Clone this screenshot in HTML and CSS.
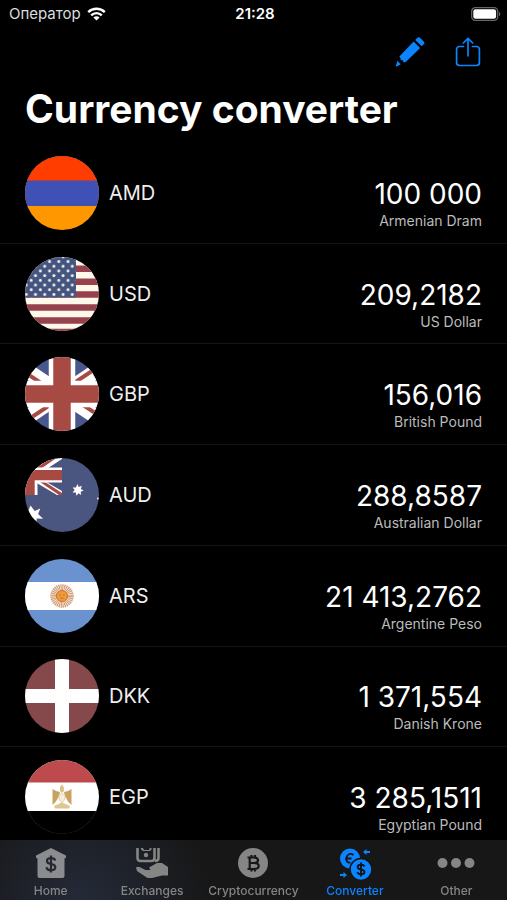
FILE: index.html
```html
<!DOCTYPE html>
<html lang="en">
<head>
  <meta charset="UTF-8">
  <meta name="viewport" content="width=device-width, initial-scale=1.0">
  <title>Currency converter</title>
  <link rel="stylesheet" href="styles.css">
</head>
<body>
  <!-- Status bar -->
  <div class="status">
    <div class="carrier">
      <span lang="ru">Оператор</span>
      <svg width="19" height="14" viewBox="0 0 19 14" fill="none" stroke="#fff" stroke-width="2.4">
        <path d="M1.2 5.2a11.8 11.8 0 0 1 16.6 0M4.2 8.3a7.5 7.5 0 0 1 10.6 0"/>
        <path d="M9.5 13.6L6.4 10.5a4.4 4.4 0 0 1 6.2 0z" fill="#fff" stroke="none"/>
      </svg>
    </div>
    <div class="time">21:28</div>
    <div class="battery">
      <svg width="30" height="14" viewBox="0 0 30 14">
        <rect x="0.7" y="0.7" width="26" height="12.6" rx="3.6" fill="none" stroke="#666" stroke-width="1.3"/>
        <rect x="2.3" y="2.3" width="22.8" height="9.4" rx="2.2" fill="#fff"/>
        <path d="M28 4.8c1.8.7 1.8 3.7 0 4.4z" fill="#666"/>
      </svg>
    </div>
  </div>

  <!-- Toolbar -->
  <div class="toolbar">
    <button type="button" aria-label="Edit">
      <svg width="30" height="30" viewBox="0 0 30 30" fill="#0a84ff">
        <path d="M20.2 2.9l2-1.9q1.5-1.3 3 0l3.5 3.4q1.4 1.5 0 2.9l-2 1.9z"/>
        <path d="M18.6 4.6l6.5 6.3L10.8 25l-2.3.4-.5-1.8-2.3-.5-.2-1.8-1.1-1.9z"/>
        <path d="M2.6 23.6l1.300 2 1.900 1.400-.8.8-3.400 1.600q-1 .2-.7-.8z"/>
      </svg>
    </button>
    <button type="button" aria-label="Share">
      <svg width="26" height="30" viewBox="0 0 26 30" fill="none" stroke="#0a84ff" stroke-width="1.7" stroke-linecap="round" stroke-linejoin="round">
        <path d="M8.5 9.5H4.6q-3 0-3 3v13q0 3 3 3h16.8q3 0 3-3v-13q0-3-3-3h-3.9"/>
        <path d="M13 18.8V1.4M8.3 6L13 1.3 17.7 6"/>
      </svg>
    </button>
  </div>

  <h1>Currency converter</h1>

  <!-- Currencies -->
  <ul class="rates">
    <li>
      <svg class="flag" viewBox="0 0 74 74">
        <rect width="74" height="74" fill="#ff9800"/>
        <rect width="74" height="50" fill="#3f51b5"/>
        <rect width="74" height="24.5" fill="#ff3d00"/>
      </svg>
      <span class="code">AMD</span>
      <div class="value">
        <span class="amount">100 000</span>
        <span class="name">Armenian Dram</span>
      </div>
    </li>
    <li>
      <svg class="flag" viewBox="0 0 74 74">
        <defs>
          <pattern id="stars" x="19.7" y="2.1" width="9.2" height="9.4" patternUnits="userSpaceOnUse">
            <circle cx="4.9" cy="2.4" r="1.5" fill="#f4f1ea"/>
            <circle cx="0" cy="7.1" r="1.5" fill="#f4f1ea"/>
            <circle cx="9.2" cy="7.1" r="1.5" fill="#f4f1ea"/>
          </pattern>
        </defs>
        <rect width="74" height="74" fill="#fdf8ea"/>
        <path d="M0 11.8h74M0 24.7h74M0 37.6h74M0 50.5h74M0 63.4h74M0 75h74" stroke="#96424d" stroke-width="6.5"/>
        <rect width="51" height="40.5" fill="#445580"/>
        <rect width="51" height="40.5" fill="url(#stars)"/>
      </svg>
      <span class="code">USD</span>
      <div class="value">
        <span class="amount">209,2182</span>
        <span class="name">US Dollar</span>
      </div>
    </li>
    <li>
      <svg class="flag" viewBox="0 0 74 74">
        <rect width="74" height="74" fill="#48578c"/>
        <path d="M-18.5 0l111 74M92.5 0l-111 74" stroke="#fff" stroke-width="15"/>
        <path d="M-18.5 3L37 40M92.5-3L37 34M-18.5 77L37 40M92.5 71L37 34" stroke="#a84a44" stroke-width="4"/>
        <path d="M37 0v74M0 37h74" stroke="#fff" stroke-width="26.5"/>
        <path d="M37 0v74M0 37h74" stroke="#a84a44" stroke-width="17.5"/>
      </svg>
      <span class="code">GBP</span>
      <div class="value">
        <span class="amount">156,016</span>
        <span class="name">British Pound</span>
      </div>
    </li>
    <li>
      <svg class="flag" viewBox="0 0 74 74">
        <rect width="74" height="74" fill="#4a567f"/>
        <path d="M8 20L37 1V-4H28L8 9zM10 22h8l19 11v4h-5L10 24z" fill="#fff"/>
        <path d="M11 10L28-1h5L17 10zM15 24h5l17 11v2h-3z" fill="#a84a44"/>
        <path d="M0 9.5h37v15H12.5V37H0z" fill="#fff"/>
        <path d="M0 12h37v10.2H9.7V37H0z" fill="#a84a44"/>
        <path d="M52.5 26l1.200 3 3.100-1.200-1 3.100 2.900 1.600-3 1.200.5 3.300-2.700-1.700-2.100 2.500-.6-3.200-3.300-.2 2.200-2.400-2.100-2.500 3.300.1z" fill="#fff"/>
        <path d="M5.500 47.500l4.200 5.500 5.600-2.500-2.200 5.500 5 4.800-6.500-.4.300 2.700-4.400-2.300L3 63.500v-10z" fill="#fff"/>
        <circle cx="73" cy="40.5" r="1" fill="#fff"/>
      </svg>
      <span class="code">AUD</span>
      <div class="value">
        <span class="amount">288,8587</span>
        <span class="name">Australian Dollar</span>
      </div>
    </li>
    <li>
      <svg class="flag" viewBox="0 0 74 74">
        <rect width="74" height="74" fill="#6a92ce"/>
        <rect y="23" width="74" height="28" fill="#fff"/>
        <circle cx="37" cy="37" r="8.5" fill="none" stroke="#d29b74" stroke-width="6.5" stroke-dasharray="1.1 .569"/>
        <circle cx="37" cy="37" r="5.5" fill="#f09a3a" stroke="#c9742c"/>
        <path d="M34.5 36h1.5m2 0h1.500M35.5 39h3" stroke="#c06c25" fill="none"/>
      </svg>
      <span class="code">ARS</span>
      <div class="value">
        <span class="amount">21 413,2762</span>
        <span class="name">Argentine Peso</span>
      </div>
    </li>
    <li>
      <svg class="flag" viewBox="0 0 74 74">
        <rect width="74" height="74" fill="#85484b"/>
        <path d="M37 0v74M0 37h74" stroke="#fff" stroke-width="14"/>
      </svg>
      <span class="code">DKK</span>
      <div class="value">
        <span class="amount">1 371,554</span>
        <span class="name">Danish Krone</span>
      </div>
    </li>
    <li>
      <svg class="flag" viewBox="0 0 74 74">
        <rect width="74" height="74" fill="#000"/>
        <rect width="74" height="51" fill="#fff"/>
        <rect width="74" height="22.5" fill="#bd4a4d"/>
        <path d="M3 51a36.6 36.6 0 0 0 68 0" fill="none" stroke="#333" stroke-width=".8"/>
        <path d="M27.5 29l3.500 2 4 1-1 4-3 5.500-3.500 3.500zM46.500 29L43 31l-4 1 1 4 3 5.500 3.500 3.500z" fill="#c9a263"/>
        <path d="M35 27l2-2.500 1.800 2.500.2 4-2 2-2-2z" fill="#dcc085"/>
        <path d="M34 34h6v5l-3 4-3-4z" fill="#f6eedc" stroke="#d8bd86" stroke-width=".7"/>
        <path d="M29 46l8-3.500 8 3.500-1 2.500H30z" fill="#dfc58f"/>
      </svg>
      <span class="code">EGP</span>
      <div class="value">
        <span class="amount">3 285,1511</span>
        <span class="name">Egyptian Pound</span>
      </div>
    </li>
  </ul>

  <!-- Tab bar -->
  <nav class="tabs">
    <a href="#home">
      <svg width="32" height="32" viewBox="0 0 32 32">
        <path d="M16 1L31 8.500v2.200l-1.500.8V29q0 2-2 2H4.500q-2 0-2-2V11.500L1 10.700V8.500z" fill="#8a8c90"/>
        <path d="M20.300 13.500q-.8-2.500-4.300-2.500-4 0-4 3 0 2.500 4 3t4.300 3.200q0 3-4.300 3-4 0-4.500-3M16 8.500v17" fill="none" stroke="#25282f" stroke-width="2.200"/>
      </svg>
      <span>Home</span>
    </a>
    <a href="#exchanges">
      <svg width="34" height="32" viewBox="0 0 34 32">
        <path d="M2.500 1v10q0 3 3 3h11q3 0 3-3V1M20 14q3.500 0 3.500-3V1" fill="none" stroke="#858585" stroke-width="2.600"/>
        <path d="M6 1h2l1 2h5l1-2h1.500v1.500L15 4H8L6 2.500z" fill="#858585"/>
        <circle cx="11" cy="8" r="2.200" fill="#858585"/>
        <path d="M1 20.500q2-1.500 4.500 0l5 2.500h5l-1.500-2.500L22 16h5l6 4v8.500h-6L17 31h-4.500L2 24z" fill="#858585"/>
      </svg>
      <span>Exchanges</span>
    </a>
    <a href="#crypto">
      <svg width="32" height="32" viewBox="0 0 32 32">
        <circle cx="16" cy="16" r="15" fill="#858585"/>
        <path d="M10.500 10.500h6.500q4 0 4 2.700T17 16h-4.500M17 16q4.700 0 4.700 3t-4.700 3h-6.500M12.700 10.500V22M14.500 8v2.500M18 8v2.500M14.500 22v2.500M18 22v2.500" fill="none" stroke="#171717" stroke-width="2.200"/>
      </svg>
      <span>Cryptocurrency</span>
    </a>
    <a href="#converter" class="active">
      <svg width="34" height="34" viewBox="0 0 34 34">
        <circle cx="12" cy="11.500" r="10" fill="#0a84ff"/>
        <path d="M15.500 8q-3.500-2.500-6 .5t-.5 6q1.500 1.500 3.500 1M9.500 11.500h4" fill="none" stroke="#151515" stroke-width="1.800"/>
        <circle cx="23" cy="22.500" r="11" fill="#0a84ff" stroke="#151515" stroke-width="1.600"/>
        <path d="M26.500 19.500q-.8-1.800-3.500-1.800-3.300 0-3.300 2.300 0 2 3.300 2.500t3.500 2.500q0 2.300-3.500 2.300-3 0-3.600-2.200M23 15.500v14" fill="none" stroke="#151515" stroke-width="1.900"/>
        <path d="M25 5l3.500-3v2H32v2h-3.500v2zM9 28l-3.500-3v2H2v2h3.500v2z" fill="#0a84ff"/>
      </svg>
      <span>Converter</span>
    </a>
    <a href="#other">
      <svg width="38" height="32" viewBox="0 0 38 32" fill="#858585">
        <circle cx="5.500" cy="16" r="5"/>
        <circle cx="19" cy="16" r="5"/>
        <circle cx="32.500" cy="16" r="5"/>
      </svg>
      <span>Other</span>
    </a>
  </nav>
</body>
</html>
```

FILE: styles.css
```css
* {
  box-sizing: border-box;
}
body {
  margin: 0;
  min-height: 100vh;
  display: flex;
  flex-direction: column;
  background: #000;
  color: #fff;
  font-family: Inter, "Liberation Sans", sans-serif;
}
.status {
  display: grid;
  grid-template-columns: 1fr auto 1fr;
  align-items: center;
  height: 27px;
  padding: 0 6px 0 9px;
  font-size: 15px;
}
.carrier {
  display: flex;
  align-items: center;
  gap: 6px;
  color: #ddd;
}
.time {
  font-weight: 600;
}
.battery {
  display: flex;
  justify-content: flex-end;
}
.toolbar {
  display: flex;
  justify-content: flex-end;
  gap: 30px;
  padding: 10px 26px 0;
}
.toolbar button {
  display: flex;
  padding: 0;
  border: 0;
  background: none;
  cursor: pointer;
}
h1 {
  margin: 0;
  padding: 18px 25px 10px;
  font-size: 39px;
  line-height: 48px;
  font-weight: 700;
}
.rates {
  flex: 1;
  display: grid;
  grid-auto-rows: 1fr;
  margin: 0;
  padding: 0 0 52px;
  list-style: none;
}
.rates li {
  display: flex;
  align-items: center;
  padding: 0 25px;
  border-bottom: 1px solid #151515;
}
.flag {
  width: 74px;
  height: 74px;
  border-radius: 50%;
}
.code {
  margin-left: 10px;
  font-size: 20px;
  color: #eee;
}
.value {
  display: flex;
  flex-direction: column;
  align-items: flex-end;
  margin-left: auto;
  padding-top: 22px;
}
.amount {
  font-size: 28px;
  line-height: 34px;
}
.name {
  font-size: 14px;
  line-height: 20px;
  color: #bbb;
}
.tabs {
  position: fixed;
  left: 0;
  right: 0;
  bottom: 0;
  display: grid;
  grid-template-columns: repeat(5, 1fr);
  height: 60px;
  background: radial-gradient(circle at 16% 100%, #242a38, #171717 130px);
}
.tabs a {
  display: flex;
  flex-direction: column;
  align-items: center;
  justify-content: space-between;
  padding: 7px 0 1px;
  font-size: 12px;
  line-height: 16px;
  font-weight: 500;
  color: #858585;
  text-decoration: none;
}
.tabs .active {
  color: #0a84ff;
}
```
